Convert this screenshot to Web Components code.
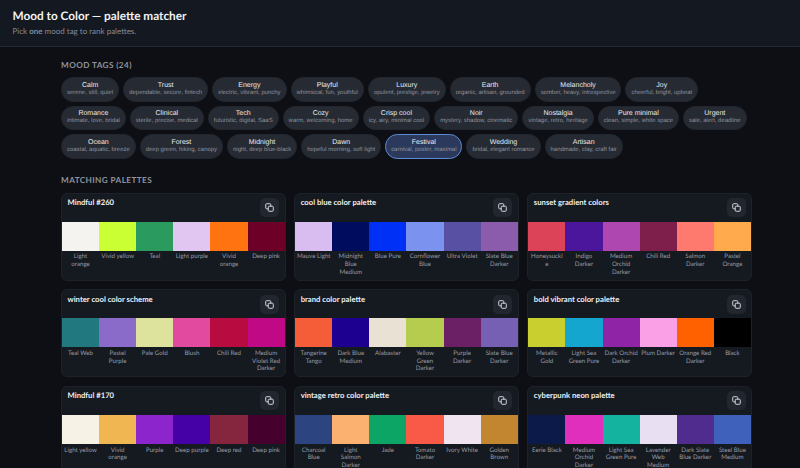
<!DOCTYPE html>
<html>
<head>
<meta charset="utf-8">
<title>Mood to Color</title>
<style>
  html { overflow: hidden; }
  body { margin: 0; background: #0d0f14; font-family: "Lato", "Liberation Sans", sans-serif; text-rendering: geometricPrecision; }
</style>
</head>
<body>
<mood-app></mood-app>

<template id="app-header-template">
  <style>
    :host {
      display: block;
      height: 47px;
      box-sizing: border-box;
      padding: 8.5px 12.5px 0;
      background: #141820;
      border-bottom: 1px solid #262a32;
    }
    h1 { margin: 0; font-size: 11.8px; line-height: 14px; font-weight: 700; color: #f0f2f5; }
    p { margin: 3px 0 0; font-size: 8px; line-height: 10px; color: #868c97; }
  </style>
  <h1><slot name="title"></slot></h1>
  <p><slot name="subtitle"></slot></p>
</template>

<template id="section-title-template">
  <style>
    :host {
      display: block;
      font-size: 8.2px;
      line-height: 10px;
      font-weight: 700;
      letter-spacing: 0.4px;
      text-transform: uppercase;
      color: #8e939d;
    }
  </style>
  <slot></slot>
</template>

<template id="mood-chip-template">
  <style>
    :host {
      display: inline-flex;
      flex-direction: column;
      align-items: center;
      box-sizing: border-box;
      height: 24.6px;
      padding: 2.6px 5px 0;
      background: #262a33;
      border: 1px solid #22262e;
      border-radius: 12.3px;
      font-family: "Liberation Sans", Arial, sans-serif;
    }
    :host([active]) {
      background: #2b3a5c;
      border-color: #5d88d2;
    }
    .label { font-size: 7px; line-height: 9px; color: #e9ebef; white-space: nowrap; }
    .desc { font-size: 5.94px; line-height: 7.5px; color: #8d929c; white-space: nowrap; }
  </style>
  <span class="label"></span>
  <span class="desc"></span>
</template>

<template id="copy-button-template">
  <style>
    :host {
      display: flex;
      align-items: center;
      justify-content: center;
      width: 19px;
      height: 19px;
      flex: none;
      background: #22262e;
      border-radius: 5px;
    }
    svg { width: 9px; height: 9px; fill: none; stroke: #d5d8de; stroke-width: 1.1; }
  </style>
  <svg viewBox="0 0 10 10">
    <rect x="3.6" y="3.6" width="5.6" height="5.6" rx="1"></rect>
    <path d="M6.4 3.6V1.8a1 1 0 0 0-1-1H1.8a1 1 0 0 0-1 1v3.6a1 1 0 0 0 1 1h1.8"></path>
  </svg>
</template>

<template id="palette-card-template">
  <style>
    :host {
      display: block;
      box-sizing: border-box;
      padding-bottom: 3.2px;
      background: #151920;
      border: 1px solid #1d2129;
      border-radius: 6px;
      overflow: hidden;
    }
    header {
      display: flex;
      justify-content: space-between;
      align-items: flex-start;
      padding: 4.5px 5.5px 4.5px 5.5px;
    }
    .name { font-size: 7.7px; line-height: 9px; font-weight: 700; color: #eceef1; }
    .swatches { display: grid; grid-template-columns: repeat(6, 1fr); }
    .swatch { height: 29px; }
    .labels { display: grid; grid-template-columns: repeat(6, 1fr); padding-top: 2.8px; }
    .labels span {
      padding: 0 1.5px;
      font-size: 6.2px;
      line-height: 7.65px;
      text-align: center;
      white-space: pre-line;
      overflow-wrap: anywhere;
      color: #989ca5;
    }
  </style>
  <header>
    <span class="name"></span>
    <copy-button></copy-button>
  </header>
  <div class="swatches"></div>
  <div class="labels"></div>
</template>

<template id="mood-app-template">
  <style>
    :host { display: block; }
    main { padding: 13px 48px 0 61px; }
    .chips { display: flex; flex-wrap: wrap; gap: 4.1px 4px; margin-top: 7px; }
    .matching { margin-top: 16px; }
    .grid { display: grid; grid-template-columns: repeat(3, 1fr); gap: 8.6px 8.5px; margin-top: 7.7px; }
  </style>
  <app-header>
    <span slot="title">Mood to Color — palette matcher</span>
    <span slot="subtitle">Pick <b>one</b> mood tag to rank palettes.</span>
  </app-header>
  <main>
    <section-title>Mood tags (24)</section-title>
    <div class="chips"></div>
    <section-title class="matching">Matching palettes</section-title>
    <div class="grid"></div>
  </main>
</template>

<script>
const MOODS = [
  ['Calm', 'serene, still, quiet'],
  ['Trust', 'dependable, secure, fintech'],
  ['Energy', 'electric, vibrant, punchy'],
  ['Playful', 'whimsical, fun, youthful'],
  ['Luxury', 'opulent, prestige, jewelry'],
  ['Earth', 'organic, artisan, grounded'],
  ['Melancholy', 'somber, heavy, introspective'],
  ['Joy', 'cheerful, bright, upbeat'],
  ['Romance', 'intimate, love, bridal'],
  ['Clinical', 'sterile, precise, medical'],
  ['Tech', 'futuristic, digital, SaaS'],
  ['Cozy', 'warm, welcoming, home'],
  ['Crisp cool', 'icy, airy, minimal cool'],
  ['Noir', 'mystery, shadow, cinematic'],
  ['Nostalgia', 'vintage, retro, heritage'],
  ['Pure minimal', 'clean, simple, white space'],
  ['Urgent', 'sale, alert, deadline'],
  ['Ocean', 'coastal, aquatic, breeze'],
  ['Forest', 'deep green, hiking, canopy'],
  ['Midnight', 'night, deep blue-black'],
  ['Dawn', 'hopeful morning, soft light'],
  ['Festival', 'carnival, poster, maximal', true],
  ['Wedding', 'bridal, elegant romance'],
  ['Artisan', 'handmade, clay, craft fair']
];

const PALETTES = [
  ['Mindful #260', [['#f4f3ef', 'Light\norange'], ['#c9ff33', 'Vivid yellow'], ['#2a9a5f', 'Teal'], ['#e2c6f2', 'Light purple'], ['#ff7410', 'Vivid\norange'], ['#6d0026', 'Deep pink']]],
  ['cool blue color palette', [['#d9bdf0', 'Mauve Light'], ['#000c5e', 'Midnight Blue Medium'], ['#0030f5', 'Blue Pure'], ['#7c92ef', 'Cornflower Blue'], ['#5750a3', 'Ultra Violet'], ['#8b5cab', 'Slate Blue Darker']]],
  ['sunset gradient colors', [['#dc4358', 'Honeysuckl\ne'], ['#4b169c', 'Indigo Darker'], ['#ae48b0', 'Medium Orchid Darker'], ['#7e1f4b', 'Chili Red'], ['#ff7a6e', 'Salmon Darker'], ['#ffab4d', 'Pastel Orange']]],
  ['winter cool color scheme', [['#21797f', 'Teal Web'], ['#8a6bc9', 'Pastel Purple'], ['#dde29c', 'Pale Gold'], ['#e24aa0', 'Blush'], ['#b80c40', 'Chili Red'], ['#c00a85', 'Medium Violet Red Darker']]],
  ['brand color palette', [['#f55c38', 'Tangerine Tango'], ['#1e0090', 'Dark Blue Medium'], ['#e9e1d4', 'Alabaster'], ['#b5cc4e', 'Yellow Green Darker'], ['#6b1f64', 'Purple Darker'], ['#7560b3', 'Slate Blue Darker']]],
  ['bold vibrant color palette', [['#c9cf2f', 'Metallic Gold'], ['#15a6cf', 'Light Sea Green Pure'], ['#8f25a6', 'Dark Orchid Darker'], ['#f9a0e6', 'Plum Darker'], ['#ff6000', 'Orange Red Darker'], ['#000000', 'Black']]],
  ['Mindful #170', [['#f7f2e6', 'Light yellow'], ['#efb651', 'Vivid\norange'], ['#8d25cc', 'Purple'], ['#4500a6', 'Deep purple'], ['#85253e', 'Deep red'], ['#45002e', 'Deep pink']]],
  ['vintage retro color palette', [['#2c4580', 'Charcoal Blue'], ['#fbb271', 'Light Salmon Darker'], ['#0da565', 'Jade'], ['#f85a47', 'Tomato Darker'], ['#efe4ef', 'Ivory White'], ['#c28530', 'Golden Brown']]],
  ['cyberpunk neon palette', [['#0c1a4a', 'Eerie Black'], ['#e02fbd', 'Medium Orchid Darker'], ['#14b3a0', 'Light Sea Green Pure'], ['#e9dff2', 'Lavender Web Medium'], ['#4f2c8e', 'Dark Slate Blue Darker'], ['#3f60bb', 'Steel Blue Medium']]]
];

class TemplateElement extends HTMLElement {
  constructor(templateId) {
    super();
    this.attachShadow({ mode: 'open' });
    this.shadowRoot.appendChild(document.getElementById(templateId).content.cloneNode(true));
  }
}

class AppHeader extends TemplateElement {
  constructor() { super('app-header-template'); }
}

class SectionTitle extends TemplateElement {
  constructor() { super('section-title-template'); }
}

class CopyButton extends TemplateElement {
  constructor() { super('copy-button-template'); }
}

class MoodChip extends TemplateElement {
  constructor() { super('mood-chip-template'); }

  connectedCallback() {
    this.shadowRoot.querySelector('.label').textContent = this.getAttribute('label');
    this.shadowRoot.querySelector('.desc').textContent = this.getAttribute('desc');
  }
}

class PaletteCard extends TemplateElement {
  constructor() { super('palette-card-template'); }

  set palette([name, colors]) {
    this.shadowRoot.querySelector('.name').textContent = name;
    const swatches = this.shadowRoot.querySelector('.swatches');
    const labels = this.shadowRoot.querySelector('.labels');
    for (const [hex, label] of colors) {
      const swatch = document.createElement('div');
      swatch.className = 'swatch';
      swatch.style.background = hex;
      swatches.appendChild(swatch);
      const text = document.createElement('span');
      text.textContent = label;
      labels.appendChild(text);
    }
  }
}

class MoodApp extends TemplateElement {
  constructor() { super('mood-app-template'); }

  connectedCallback() {
    const chips = this.shadowRoot.querySelector('.chips');
    for (const [label, desc, active] of MOODS) {
      const chip = document.createElement('mood-chip');
      chip.setAttribute('label', label);
      chip.setAttribute('desc', desc);
      if (active) chip.setAttribute('active', '');
      chips.appendChild(chip);
    }
    const grid = this.shadowRoot.querySelector('.grid');
    for (const palette of PALETTES) {
      const card = document.createElement('palette-card');
      card.palette = palette;
      grid.appendChild(card);
    }
  }
}

customElements.define('app-header', AppHeader);
customElements.define('section-title', SectionTitle);
customElements.define('copy-button', CopyButton);
customElements.define('mood-chip', MoodChip);
customElements.define('palette-card', PaletteCard);
customElements.define('mood-app', MoodApp);
</script>
</body>
</html>
